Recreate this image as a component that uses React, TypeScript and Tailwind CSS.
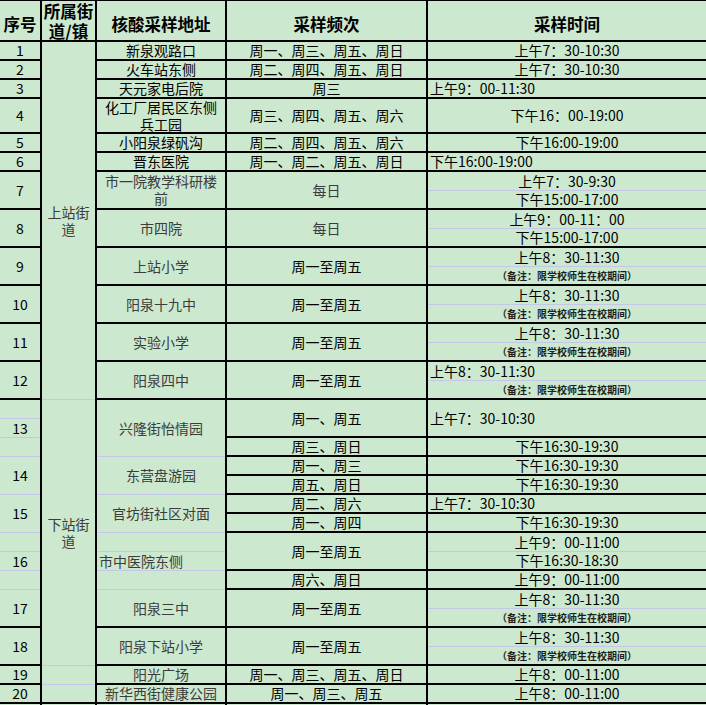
import type { ReactNode } from 'react';
import clsx from 'clsx';

// one cell of a column; h is the full height incl. bottom line
interface Cell {
    h: number;
    t?: ReactNode;
    faint?: boolean;
    left?: boolean;
    gray?: boolean;
    note?: boolean;
}

const H: Record<number, string> = {
    19: 'h-[19px]',
    35: 'h-[35px]',
    38: 'h-[38px]',
    57: 'h-[57px]',
    266: 'h-[266px]',
    358: 'h-[358px]',
};

const NOTE = '（备注：限学校师生在校期间）';

const seqCells: Cell[] = [
    { h: 19, t: '1' },
    { h: 19, t: '2' },
    { h: 19, t: '3' },
    { h: 35, t: '4' },
    { h: 19, t: '5' },
    { h: 19, t: '6' },
    { h: 38, t: '7' },
    { h: 38, t: '8' },
    { h: 38, t: '9' },
    { h: 38, t: '10' },
    { h: 38, t: '11' },
    { h: 38, t: '12' },
    { h: 19, faint: true },
    { h: 19, t: '13', faint: true },
    { h: 19, faint: true },
    { h: 38, t: '14', faint: true },
    { h: 38, t: '15', faint: true },
    { h: 19, faint: true },
    { h: 19, t: '16', faint: true },
    { h: 19, faint: true },
    { h: 38, t: '17' },
    { h: 38, t: '18' },
    { h: 19, t: '19' },
    { h: 19, t: '20' },
];

const streetCells: Cell[] = [
    { h: 358, t: <>上站街<br />道</>, faint: true, gray: true },
    { h: 266, t: <>下站街<br />道</>, faint: true, gray: true },
    { h: 19, faint: true },
    { h: 19 },
];

const placeCells: Cell[] = [
    { h: 19, t: '新泉观路口' },
    { h: 19, t: '火车站东侧' },
    { h: 19, t: '天元家电后院' },
    { h: 35, t: <>化工厂居民区东侧<br />兵工园</> },
    { h: 19, t: '小阳泉绿矾沟' },
    { h: 19, t: '晋东医院' },
    { h: 38, t: <>市一院教学科研楼<br />前</>, gray: true },
    { h: 38, t: '市四院', gray: true },
    { h: 38, t: '上站小学', gray: true },
    { h: 38, t: '阳泉十九中', gray: true },
    { h: 38, t: '实验小学', gray: true },
    { h: 38, t: '阳泉四中', gray: true },
    { h: 57, t: '兴隆街怡情园', faint: true, gray: true },
    { h: 38, t: '东营盘游园', faint: true, gray: true },
    { h: 38, t: '官坊街社区对面', faint: true, gray: true },
    { h: 19, faint: true },
    { h: 19, t: '市中医院东侧', faint: true, left: true, gray: true },
    { h: 19, faint: true },
    { h: 38, t: '阳泉三中', gray: true },
    { h: 38, t: '阳泉下站小学', gray: true },
    { h: 19, t: '阳光广场', gray: true },
    { h: 19, t: '新华西街健康公园', gray: true },
];

const freqCells: Cell[] = [
    { h: 19, t: '周一、周三、周五、周日' },
    { h: 19, t: '周二、周四、周五、周日' },
    { h: 19, t: '周三' },
    { h: 35, t: '周三、周四、周五、周六' },
    { h: 19, t: '周二、周四、周五、周六' },
    { h: 19, t: '周一、周二、周五、周日' },
    { h: 38, t: '每日', gray: true },
    { h: 38, t: '每日', gray: true },
    { h: 38, t: '周一至周五' },
    { h: 38, t: '周一至周五' },
    { h: 38, t: '周一至周五' },
    { h: 38, t: '周一至周五' },
    { h: 38, t: '周一、周五' },
    { h: 19, t: '周三、周日' },
    { h: 19, t: '周一、周三' },
    { h: 19, t: '周五、周日' },
    { h: 19, t: '周二、周六' },
    { h: 19, t: '周一、周四' },
    { h: 38, t: '周一至周五' },
    { h: 19, t: '周六、周日' },
    { h: 38, t: '周一至周五' },
    { h: 38, t: '周一至周五' },
    { h: 19, t: '周一、周三、周五、周日' },
    { h: 19, t: '周一、周三、周五' },
];

const timeCells: Cell[] = [
    { h: 19, t: '上午7：30-10:30' },
    { h: 19, t: '上午7：30-10:30' },
    { h: 19, t: '上午9：00-11:30', left: true },
    { h: 35, t: '下午16：00-19:00' },
    { h: 19, t: '下午16:00-19:00' },
    { h: 19, t: '下午16:00-19:00', left: true },
    { h: 19, t: '上午7：30-9:30', faint: true },
    { h: 19, t: '下午15:00-17:00' },
    { h: 19, t: '上午9：00-11：00', faint: true },
    { h: 19, t: '下午15:00-17:00' },
    { h: 19, t: '上午8：30-11:30', faint: true },
    { h: 19, t: NOTE, note: true },
    { h: 19, t: '上午8：30-11:30', faint: true },
    { h: 19, t: NOTE, note: true },
    { h: 19, t: '上午8：30-11:30', faint: true },
    { h: 19, t: NOTE, note: true },
    { h: 19, t: '上午8：30-11:30', faint: true, left: true },
    { h: 19, t: NOTE, note: true },
    { h: 38, t: '上午7：30-10:30', left: true },
    { h: 19, t: '下午16:30-19:30' },
    { h: 19, t: '下午16:30-19:30' },
    { h: 19, t: '下午16:30-19:30' },
    { h: 19, t: '上午7：30-10:30', left: true },
    { h: 19, t: '下午16:30-19:30' },
    { h: 19, t: '上午9：00-11:00', faint: true },
    { h: 19, t: '下午16:30-18:30' },
    { h: 19, t: '上午9：00-11:00' },
    { h: 19, t: '上午8：30-11:30', faint: true },
    { h: 19, t: NOTE, note: true },
    { h: 19, t: '上午8：30-11:30', faint: true },
    { h: 19, t: NOTE, note: true },
    { h: 19, t: '上午8：00-11:00' },
    { h: 19, t: '上午8：00-11:00' },
];

function CellBox({ cell }: { cell: Cell }) {
    return (
        <div
            className={clsx(
                'flex shrink-0 items-center whitespace-nowrap',
                H[cell.h],
                cell.faint ? 'border-b border-[#c6c6e8]' : 'border-b-2 border-black',
                cell.left ? 'justify-start pl-[2px]' : 'justify-center text-center',
                cell.note ? 'text-[10px] leading-[12px] font-bold' : 'text-[14px] leading-[17px]',
                cell.note ? 'text-[#1e1e1e]' : cell.gray ? 'text-[#3c3c3c]' : 'text-black'
            )}
        >
            {cell.t}
        </div>
    );
}

interface ColumnProps {
    title: ReactNode;
    cells: Cell[];
    className: string;
    headClass?: string;
}

function Column({ title, cells, className, headClass = 'pt-[6px]' }: ColumnProps) {
    return (
        <div className={clsx('flex flex-col', className)}>
            <div
                className={clsx(
                    'flex h-[41px] shrink-0 items-center justify-center border-b-2 border-black text-center text-[16.5px] font-bold leading-[20px] text-black',
                    headClass
                )}
            >
                {title}
            </div>
            {cells.map((c, i) => (
                <CellBox key={i} cell={c} />
            ))}
        </div>
    );
}

export default function App() {
    return (
        <div className="flex h-[705px] w-[706px] overflow-hidden border-t border-black bg-[#cce8cf] font-['Noto_Sans_CJK_SC','Noto_Sans',sans-serif]">
            <Column title="序号" cells={seqCells} className="w-[42px] shrink-0 border-r-2 border-black" />
            <Column
                title={<>所属街<br />道/镇</>}
                cells={streetCells}
                className="w-[55px] shrink-0 border-r-2 border-black"
                headClass="pt-0"
            />
            <Column title="核酸采样地址" cells={placeCells} className="w-[130px] shrink-0 border-r-2 border-black" />
            <Column title="采样频次" cells={freqCells} className="w-[201px] shrink-0 border-r-2 border-black" />
            <Column title="采样时间" cells={timeCells} className="min-w-0 flex-1" />
        </div>
    );
}
